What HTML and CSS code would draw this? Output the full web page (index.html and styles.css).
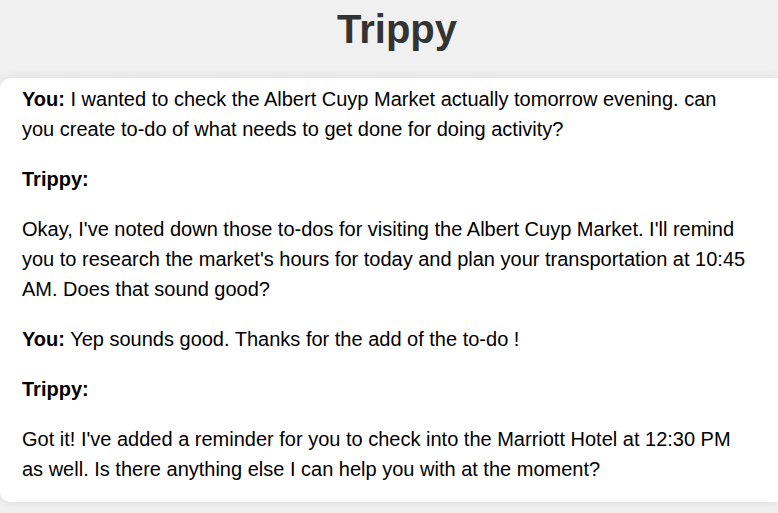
FILE: index.html
```html
<!DOCTYPE html>
<html>
<head>
<meta charset="utf-8">
<link rel="stylesheet" href="styles.css">
</head>
<body>
<div class="app">
  <h1 class="title">Trippy</h1>
  <div class="chat">
    <p class="msg"><strong>You:</strong> I wanted to check the Albert Cuyp Market actually tomorrow evening. can you create to-do of what needs to get done for doing activity?</p>
    <p class="msg"><strong>Trippy:</strong></p>
    <p class="msg">Okay, I've noted down those to-dos for visiting the Albert Cuyp Market. I'll remind you to research the market's hours for today and plan your transportation at 10:45 AM. Does that sound good?</p>
    <p class="msg"><strong>You:</strong> Yep sounds good. Thanks for the add of the to-do !</p>
    <p class="msg"><strong>Trippy:</strong></p>
    <p class="msg">Got it! I've added a reminder for you to check into the Marriott Hotel at 12:30 PM as well. Is there anything else I can help you with at the moment?</p>
  </div>
</div>
</body>
</html>
```
FILE: styles.css
```css
html, body {
  margin: 0;
  padding: 0;
  background: #f0f0f0;
  font-family: "Liberation Sans", Arial, sans-serif;
  overflow: hidden;
}
.app {
  width: 778px;
  height: 513px;
  display: flex;
  flex-direction: column;
}
.title {
  margin: 0;
  padding: 6px 0 0 16px;
  height: 72px;
  box-sizing: border-box;
  text-align: center;
  font-size: 40px;
  font-weight: bold;
  line-height: 46px;
  color: #333;
}
.chat {
  background: #fff;
  border-radius: 10px 0 0 10px;
  box-shadow: 0 0 10px rgba(0, 0, 0, 0.1);
  margin-top: 6px;
  height: 424px;
  box-sizing: border-box;
  padding: 6px 30px 0 22px;
}
.msg {
  margin: 0 0 20px 0;
  font-size: 20px;
  line-height: 30px;
  color: #000;
}
```
